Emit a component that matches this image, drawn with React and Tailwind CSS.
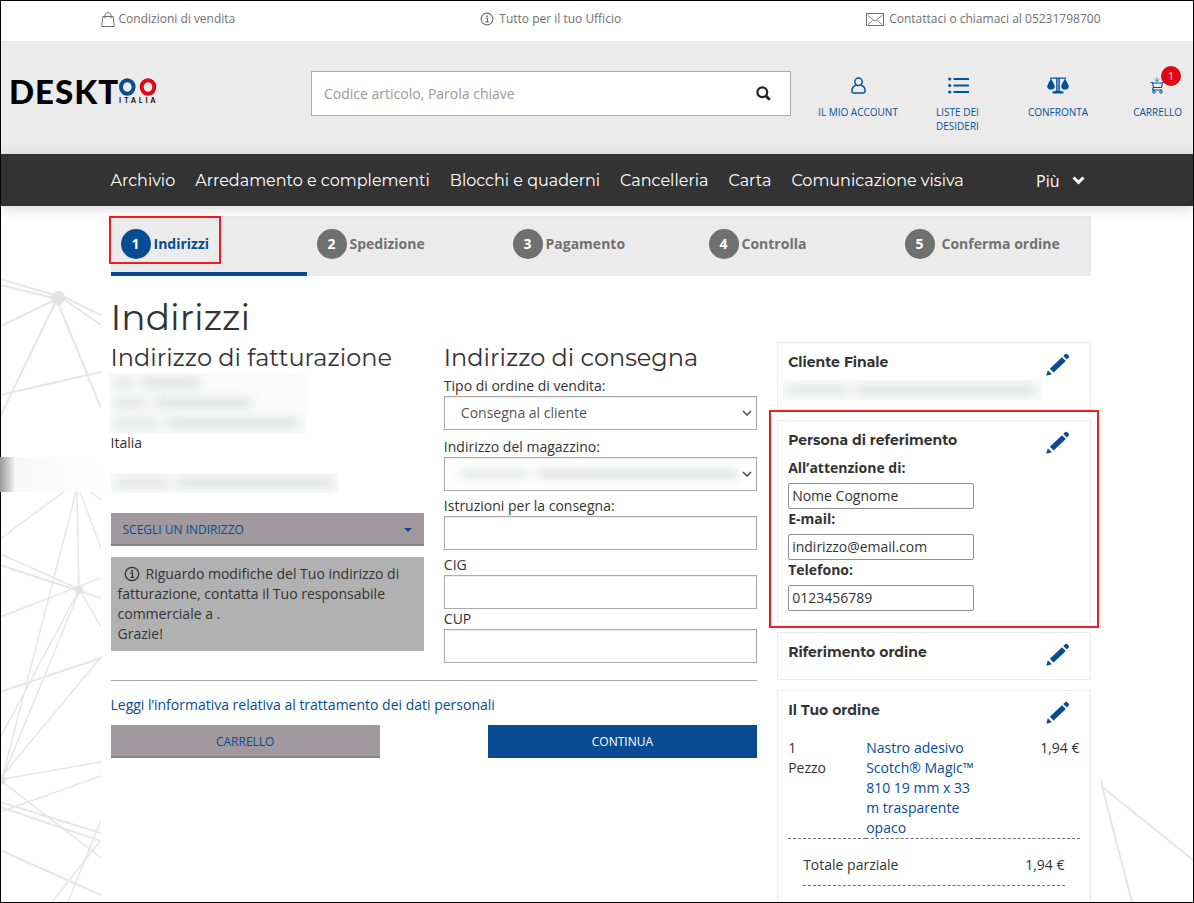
import React from "react";

const steps = ["Indirizzi", "Spedizione", "Pagamento", "Controlla", "Conferma ordine"];

const categories = [
    "Archivio",
    "Arredamento e complementi",
    "Blocchi e quaderni",
    "Cancelleria",
    "Carta",
    "Comunicazione visiva",
];

const deliveryInputs = [
    { id: "istruzioni", label: "Istruzioni per la consegna:", space: "mb-[5px]" },
    { id: "cig", label: "CIG", space: "" },
    { id: "cup", label: "CUP", space: "" },
];

const contactFields = [
    { id: "attenzione", label: "All’attenzione di:", value: "Nome Cognome" },
    { id: "email", label: "E-mail:", value: "indirizzo@email.com" },
    { id: "telefono", label: "Telefono:", value: "0123456789" },
];

const orderLines = [
    { qty: "1", unit: "Pezzo", name: "Nastro adesivo Scotch® Magic™ 810 19 mm x 33 m trasparente opaco", price: "1,94 €" },
];

function InfoIcon({ size }) {
    return (
        <svg width={size} height={size} viewBox="0 0 14 14" fill="none" className="shrink-0">
            <circle cx="7" cy="7" r="5.9" stroke="currentColor" strokeWidth="1.1" />
            <circle cx="7" cy="4.2" r="0.9" fill="currentColor" />
            <path d="M5.6 6.2H7.4V9.6M5.4 9.9H8.8" stroke="currentColor" strokeWidth="1.1" />
        </svg>
    );
}

function BagIcon() {
    return (
        <svg width="14" height="16" viewBox="0 0 14 16" fill="none" stroke="currentColor" className="mt-[2px] shrink-0">
            <path d="M1.8 4.5H12.2L13.3 14.5H.7Z" />
            <path d="M4 6.5V3.5C4 1.6 5.3.6 7 .6S10 1.6 10 3.5V6.5" />
        </svg>
    );
}

function MailIcon() {
    return (
        <svg width="18" height="13" viewBox="0 0 18 13" fill="none" stroke="currentColor" className="shrink-0">
            <rect x=".5" y=".5" width="17" height="12" />
            <path d="M1.5 2 7.8 7.3Q9 8.2 10.2 7.3L16.5 2M2 11.5 6.5 7.5M16 11.5 11.5 7.5" strokeWidth=".9" />
        </svg>
    );
}

function UserIcon() {
    return (
        <svg width="15" height="17" viewBox="0 0 15 17" fill="none" stroke="currentColor" strokeWidth="1.5">
            <circle cx="7.5" cy="4.8" r="3.7" />
            <path d="M4.8 8.3C2 9.2.9 11.5.9 14.2Q.9 15.9 2.6 15.9H12.4Q14.1 15.9 14.1 14.2C14.1 11.5 13 9.2 10.2 8.3" />
        </svg>
    );
}

function ListIcon() {
    return (
        <svg width="21" height="17" viewBox="0 0 21 17" stroke="currentColor" strokeWidth="1.8" fill="currentColor">
            <path d="M5.5 2H21M5.5 8.5H21M5.5 15H21" />
            <g stroke="none">
                <circle cx="1.7" cy="2" r="1.6" />
                <circle cx="1.7" cy="8.5" r="1.6" />
                <circle cx="1.7" cy="15" r="1.6" />
            </g>
        </svg>
    );
}

function ScaleIcon() {
    return (
        <svg width="22" height="17" viewBox="0 0 22 17" fill="currentColor">
            <path d="M3 .6H19V1.8H3ZM9.2 1.5H10.6V14H9.2ZM11.4 1.5H12.8V14H11.4ZM5.5 14.6H16.5V16.6H5.5ZM7.500 13.800H14.500V15H7.500Z" />
            <path d="M4 1.200C5.500 4.500 7.800 7.500 7.800 9.800Q7.500 12.600 4 12.600T.2 9.800C.2 7.500 2.500 4.500 4 1.200Z" />
            <path d="M18 1.200C19.500 4.500 21.800 7.500 21.800 9.800Q21.500 12.600 18 12.600T14.200 9.800C14.200 7.500 16.500 4.500 18 1.200Z" />
        </svg>
    );
}

function CartIcon() {
    return (
        <svg width="15" height="17" viewBox="0 0 15 17" fill="none" stroke="currentColor">
            <path d="M7 .5V4M5 2.5 7 4.5 9 2.5" strokeWidth=".8" />
            <path d="M.5 5.5H2.5L3.5 10.5H11.5L12.5 5.5H14.5M2.6 6H12.4M3.3 10.5 2.7 13H12.3" strokeWidth="1.2" />
            <circle cx="4" cy="14.9" r="1.3" />
            <circle cx="11" cy="14.9" r="1.3" />
        </svg>
    );
}

function PencilIcon() {
    return (
        <svg width="24" height="24" viewBox="0 0 24 24" fill="currentColor">
            <path d="M.3 22.8 1.8 17.3 5.8 21.3Z" />
            <path d="M3.8 15.8 16 4.3 19.8 8.1 7.6 19.6Z" />
            <path d="M17.3 3 19.3 1.1Q20.3.3 21.3 1.2L22.6 2.5Q23.5 3.5 22.7 4.6L20.9 6.6Z" />
        </svg>
    );
}

function ChevronIcon() {
    return (
        <svg
            width="10"
            height="7"
            viewBox="0 0 10 7"
            fill="none"
            stroke="#444"
            strokeWidth="1.5"
            className="pointer-events-none absolute top-[14px] right-[5px]"
        >
            <path d="M1 1 5 5 9 1" />
        </svg>
    );
}

function Logo() {
    return (
        <a href="#" className="flex items-center font-['Lato',sans-serif] text-black">
            <span className="text-[33px] leading-8 font-black tracking-[1px]">DESKT</span>
            <span className="flex flex-col gap-px">
                <svg width="38" height="18" viewBox="0 0 38 18" fill="none" strokeWidth="4">
                    <ellipse cx="8.3" cy="9" rx="6.3" ry="6.8" stroke="#074c92" />
                    <ellipse cx="29" cy="9" rx="6.3" ry="6.8" stroke="#e30613" />
                </svg>
                <span className="text-[7px] leading-[7px] font-bold tracking-[3px]">ITALIA</span>
            </span>
        </a>
    );
}

function HeaderLink({ icon, label, className }) {
    return (
        <a href="#" className={`relative flex flex-col items-center gap-[11px] text-[10px] leading-[14px] text-[#00539b] ${className}`}>
            {icon}
            <span>{label}</span>
        </a>
    );
}

// Hidden personal data, drawn as a smudge
function Smudge({ width }) {
    return (
        <div className="flex h-5 items-center gap-2 px-1" style={{ width }}>
            <div className="h-[10px] w-1/4 bg-[#e4e5e5] blur-[5px]" />
            <div className="h-[10px] flex-1 bg-[#dfe1e0] blur-[5px]" />
        </div>
    );
}

function Card({ title, className, children }) {
    return (
        <section className={`relative border border-[#ebebeb] px-[10px] pt-[9px] ${className}`}>
            <div className="flex h-7 items-start justify-between">
                <h3 className="font-['Montserrat',sans-serif] text-[14px] leading-5 font-bold">{title}</h3>
                <a href="#" aria-label="Modifica" className="mt-px mr-[10px] text-[#074c92]">
                    <PencilIcon />
                </a>
            </div>
            {children}
        </section>
    );
}

const fieldClass = "block h-[34px] w-full border border-[#aaa] bg-white shadow-[inset_0_1px_1px_rgba(0,0,0,0.075)]";
const headingClass = "h-[31px] font-['Montserrat',sans-serif] text-[24px] leading-8 font-normal";
const greyButtonClass = "h-[33px] bg-[#a09a9e] text-[12px] text-[#074c92] shadow-[inset_0_-2px_0_#898386]";

export default function App() {
    return (
        <div className="relative flex min-h-screen flex-col border border-black bg-white font-['Open_Sans',sans-serif] text-[14px] leading-5 text-[#333]">
            <div className="h-10 pl-[7px] text-[12px] text-[#707070]">
                <div className="mx-auto flex h-9 w-full max-w-[1000px] items-center justify-between">
                    <a href="#" className="flex items-center gap-1"><BagIcon />Condizioni di vendita</a>
                    <a href="#" className="flex items-center gap-[5px]"><InfoIcon size={14} />Tutto per il tuo Ufficio</a>
                    <a href="#" className="flex items-center gap-[5px]"><MailIcon />Contattaci o chiamaci al 05231798700</a>
                </div>
            </div>

            <header className="flex h-[113px] items-start bg-[#ebebeb] pt-[30px]">
                <div className="w-[310px] shrink-0 pt-1 pl-2">
                    <Logo />
                </div>
                <form className="flex h-[45px] w-[480px] items-center border border-[#aaa] bg-white">
                    <input
                        aria-label="Cerca"
                        placeholder="Codice articolo, Parola chiave"
                        className="h-full min-w-0 flex-1 pl-3 text-[14px] outline-none placeholder:text-[#999]"
                    />
                    <button type="button" aria-label="Avvia ricerca" className="px-[19px]">
                        <svg width="15" height="15" viewBox="0 0 15 15" fill="none" stroke="#222">
                            <circle cx="6.300" cy="6.300" r="4.900" strokeWidth="2.200" />
                            <path d="M10 10 13.800 13.800" strokeWidth="2.800" />
                        </svg>
                    </button>
                </form>
                <div className="grid min-w-0 flex-1 grid-cols-[100px_100px_100px_1fr] pt-[6px] pl-[17px]">
                    <HeaderLink icon={<UserIcon />} label="IL MIO ACCOUNT" className="" />
                    <HeaderLink icon={<ListIcon />} label="LISTE DEI DESIDERI" className="px-7" />
                    <HeaderLink icon={<ScaleIcon />} label="CONFRONTA" className="" />
                    <HeaderLink
                        className="mr-[11px] justify-self-end"
                        icon={
                            <>
                                <CartIcon />
                                <span className="absolute -top-[11px] right-px flex size-5 items-center justify-center rounded-full bg-[#e30613] text-white">
                                    1
                                </span>
                            </>
                        }
                        label="CARRELLO"
                    />
                </div>
            </header>

            <nav className="relative z-10 h-[52px] bg-[#333] pt-px pl-[7px] font-['Montserrat',sans-serif] text-[16px] text-white shadow-[0_2px_12px_rgba(60,40,60,0.2)]">
                <div className="mx-auto flex h-full w-full max-w-[1000px] items-center gap-5 px-[10px]">
                    {categories.map((name) => (
                        <a key={name} href="#" className="whitespace-nowrap">{name}</a>
                    ))}
                    <button type="button" className="mr-[6px] ml-auto flex items-center gap-3 font-['Open_Sans',sans-serif] text-[16px]">
                        Più
                        <svg width="13" height="9" viewBox="0 0 13 9" fill="none" stroke="#fff" strokeWidth="3">
                            <path d="M1.5 1.5 6.5 6.3 11.5 1.5" />
                        </svg>
                    </button>
                </div>
            </nav>

            <div className="flex flex-1">
                <div className="relative shrink grow basis-[7px] overflow-hidden">
                    <svg width="100" height="696" viewBox="1 206 100 696" fill="none" stroke="#e6e6e6" strokeWidth="1.5" className="absolute top-0 right-0">
                        <path d="M0 279 55 295M0 285 58 299M0 326 55 300M55 303 0 417M58 303 101 408M60 295 101 315M62 298 101 325M0 395 101 372" strokeWidth="2" />
                        <path d="M62 493 0 539M76 492 3 775M77 492 79 590M80 492 101 548M92 493 101 500M77 485 62 493M77 485 92 493M0 554 79 589M0 617 101 578M80 590 101 627M78 592 0 738M79 592 3 777M101 657 3 775M3 779 101 762M0 812 101 776M0 780 101 858M101 820 68 902M101 840 52 902" />
                        <path d="M0 565 101 598M0 692 101 658M0 802 101 833M0 807 101 841M0 850 101 895" strokeWidth="2" />
                        <g fill="#e2e2e4" stroke="none">
                            <circle cx="58" cy="298" r="7" />
                            <circle cx="79" cy="590" r="4" />
                            <circle cx="1" cy="780" r="5" />
                        </g>
                    </svg>
                </div>

                <main className="flex flex-[0_1_1000px] flex-col px-[10px] pt-[10px]">
                    <ol className="grid grid-cols-5 bg-[#ebebeb] font-bold">
                        {steps.map((step, i) => (
                            <li
                                key={step}
                                className={`relative flex h-[60px] items-center gap-[3px] border-b-4 pl-[10px] last:gap-[7px] ${i === 0 ? "border-[#074c92] text-[#074c92]" : "border-transparent text-[#707070]"}`}
                            >
                                <span className={`flex size-[30px] items-center justify-center rounded-full text-white ${i === 0 ? "bg-[#074c92]" : "bg-[#707070]"}`}>
                                    {i + 1}
                                </span>
                                {step}
                                {i === 0 && <div className="absolute top-0 -left-[2px] h-12 w-28 border-2 border-[#ee1c25]" />}
                            </li>
                        ))}
                    </ol>

                    <h1 className="mt-[21px] mb-[5px] font-['Montserrat',sans-serif] text-[36px] leading-10 font-normal">Indirizzi</h1>

                    <div className="grid flex-1 grid-cols-3 gap-x-5">
                        <div className="col-span-2">
                            <div className="grid grid-cols-2 gap-x-5">
                                <div>
                                    <h2 className={headingClass}>Indirizzo di fatturazione</h2>
                                    <address className="not-italic">
                                        <div className="-ml-[2px] w-[198px] overflow-hidden bg-[#fafbfa]">
                                            <Smudge width={95} />
                                            <Smudge width={146} />
                                            <Smudge width={194} />
                                        </div>
                                        Italia
                                        <div className="mt-5 w-[228px] overflow-hidden bg-[#fafafa]">
                                            <Smudge width={226} />
                                        </div>
                                    </address>
                                    <button type="button" className={`mt-5 flex w-full items-center justify-between px-3 ${greyButtonClass}`}>
                                        SCEGLI UN INDIRIZZO
                                        <svg width="8" height="4" viewBox="0 0 8 4" fill="currentColor">
                                            <path d="M0 0H8L4 4Z" />
                                        </svg>
                                    </button>
                                    <div className="mt-[11px] bg-[#b1b1b1] p-[7px]">
                                        <span className="mr-[6px] ml-[6px] inline-block align-[-3px]"><InfoIcon size={16} /></span>
                                        Riguardo modifiche del Tuo indirizzo di fatturazione, contatta il Tuo responsabile commerciale a .
                                        <br />
                                        Grazie!
                                    </div>
                                </div>

                                <form>
                                    <h2 className={`mb-[3px] ${headingClass}`}>Indirizzo di consegna</h2>
                                    <label htmlFor="tipo" className="block">Tipo di ordine di vendita:</label>
                                    <div className="relative mb-[7px]">
                                        <select id="tipo" className={`${fieldClass} appearance-none px-4 text-[#555]`}>
                                            <option>Consegna al cliente</option>
                                        </select>
                                        <ChevronIcon />
                                    </div>
                                    <label htmlFor="magazzino" className="block">Indirizzo del magazzino:</label>
                                    <div className="relative mb-[5px]">
                                        <select id="magazzino" className={`${fieldClass} appearance-none px-4`}>
                                            <option></option>
                                        </select>
                                        <div className="pointer-events-none absolute top-[7px] left-3">
                                            <Smudge width={286} />
                                        </div>
                                        <ChevronIcon />
                                    </div>
                                    {deliveryInputs.map(({ id, label, space }) => (
                                        <div key={id} className={space}>
                                            <label htmlFor={id} className="block">{label}</label>
                                            <input id={id} className={`${fieldClass} px-4`} />
                                        </div>
                                    ))}
                                </form>
                            </div>

                            <hr className="mt-[17px] mb-[14px] border-[#aaa]" />
                            <a href="#" className="block text-[#074c92]">Leggi l’informativa relativa al trattamento dei dati personali</a>
                            <div className="mt-[10px] flex justify-between">
                                <button type="button" className={`w-5/12 ${greyButtonClass}`}>CARRELLO</button>
                                <button type="button" className="h-[33px] w-5/12 bg-[#074c92] text-[12px] text-white">CONTINUA</button>
                            </div>
                        </div>

                        <aside className="flex flex-col gap-[10px]">
                            <Card title="Cliente Finale" className="pb-[9px]">
                                <div className="-ml-[5px] w-[260px] overflow-hidden bg-[#fafbfa]">
                                    <Smudge width={256} />
                                </div>
                            </Card>

                            <Card title="Persona di referimento" className="pb-[10px]">
                                {contactFields.map(({ id, label, value }) => (
                                    <div key={id}>
                                        <label htmlFor={id} className="mb-[5px] block font-bold">{label}</label>
                                        <input id={id} defaultValue={value} className="block h-[26px] w-[186px] rounded-[2px] border border-[#8f8f9d] bg-white px-[3px] pb-[2px]" />
                                    </div>
                                ))}
                                <div className="pointer-events-none absolute -inset-x-[9px] -top-[11px] -bottom-[7px] border-2 border-[#ee1c25]" />
                            </Card>

                            <Card title="Riferimento ordine" className="pb-[9px]" />

                            <Card title="Il Tuo ordine" className="flex-1 border-b-0 pb-4">
                                <table className="mt-[10px] w-full">
                                    <tbody>
                                        {orderLines.map((line) => (
                                            <tr key={line.name} className="border-b border-dashed border-[#707070] align-top">
                                                <td className="w-[78px]">{line.qty}<br />{line.unit}</td>
                                                <td className="w-[112px]"><a href="#" className="text-[#074c92]">{line.name}</a></td>
                                                <td className="text-right">{line.price}</td>
                                            </tr>
                                        ))}
                                    </tbody>
                                </table>
                                <div className="mx-[15px] mt-4 flex justify-between border-b border-dashed border-[#707070] pb-[10px]">
                                    <span>Totale parziale</span>
                                    <span>1,94 €</span>
                                </div>
                            </Card>
                        </aside>
                    </div>
                </main>

                <div className="relative flex-1 overflow-hidden">
                    <svg width="92" height="696" viewBox="1101 206 92 696" fill="none" stroke="#e6e6e6" strokeWidth="2" className="absolute top-0 left-0">
                        <path d="M1101 786 1193 860M1101 780 1103 790 1132 902" />
                    </svg>
                </div>
            </div>

            <div className="absolute top-[456px] -left-px h-[35px] w-[110px] bg-linear-to-r from-[#999] from-0% via-[#f8f8f8] via-14% to-white" />
        </div>
    );
}
